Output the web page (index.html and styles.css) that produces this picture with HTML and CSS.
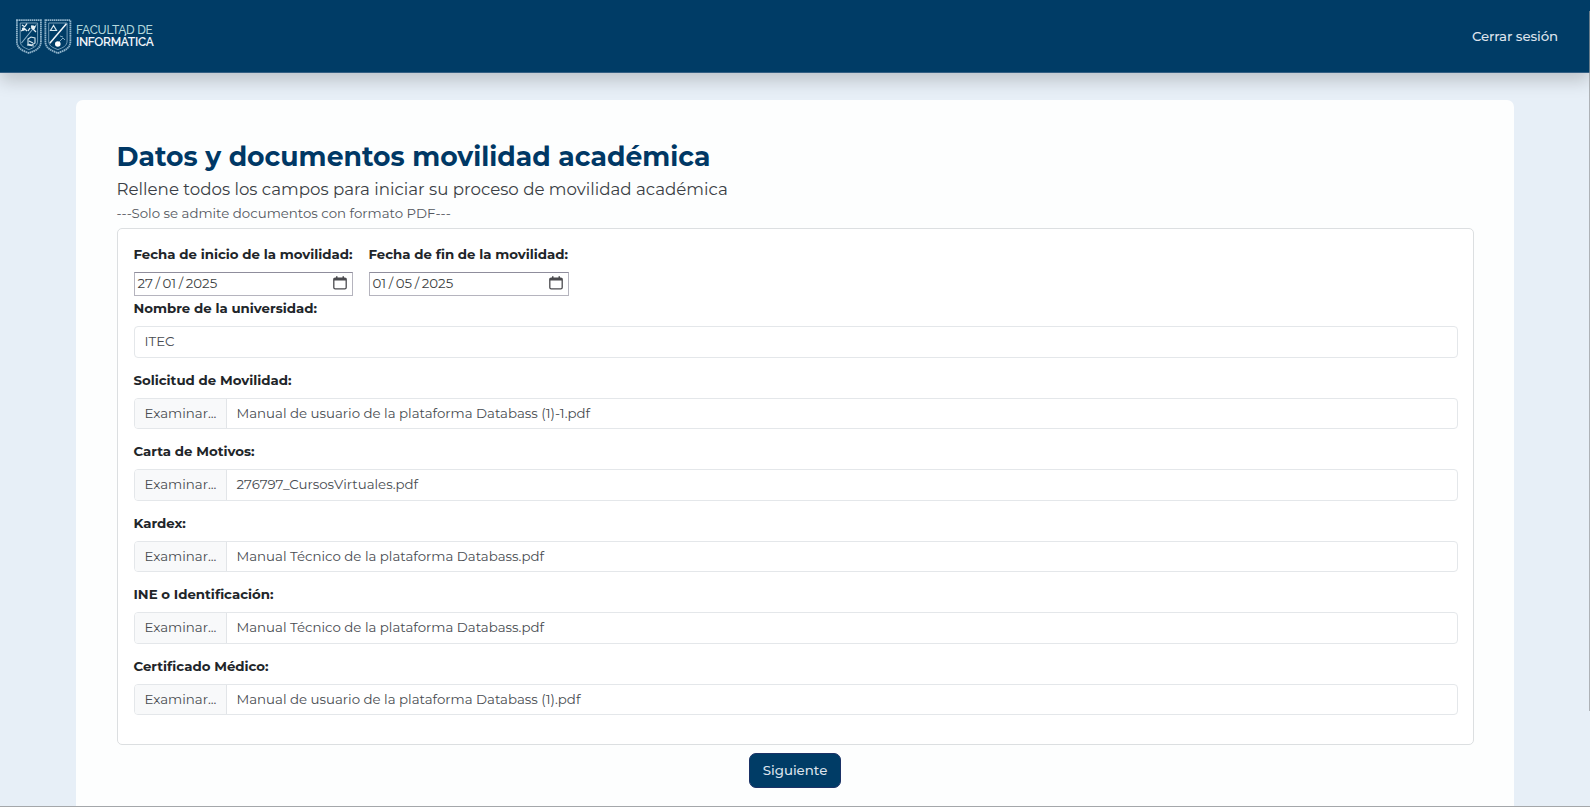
FILE: index.html
```html
<!DOCTYPE html>
<html lang="es">
<head>
<meta charset="utf-8">
<title>Movilidad académica</title>
<link rel="stylesheet" href="styles.css">
</head>
<body>
<header class="navbar">
  <a class="brand">
    <svg class="crest" width="56" height="35" viewBox="0 0 56 35" fill="none" stroke="#8fb3ca">
      <g>
        <path d="M.9 1.2H24.9V22.5C24.9 29.5 19 31.8 12.9 34C6.8 31.8.9 29.5.9 22.5Z" stroke-width="1.8" stroke-dasharray="1.6 .5"/>
        <path d="M4.2 4H21.6V22C21.6 27 17.5 28.8 12.9 30.6C8.3 28.8 4.2 27 4.2 22Z" stroke-width=".8"/>
        <path d="M20.5 5.5L5.5 24" stroke-width="1.1"/>
        <path d="M6 6l3 2M11 4.500l-2 3M5 12l4-2 2 2M15 7l4 1-2 3M17 10l3 3M14 9l-2 3" stroke="#e6f0f5" stroke-width="1.3"/>
        <circle cx="7.500" cy="10" r="1.7" fill="#e6f0f5" stroke="none"/>
        <circle cx="17" cy="8.5" r="2" fill="#e6f0f5" stroke="none"/>
        <path d="M12 20l3-2 4 1v5l-3 2-4-1zM13 22l4 2M11 26l7 1" stroke="#d5e5ed" stroke-width="1.1"/>
      </g>
      <g>
        <path d="M29.4 1.2H54.4V22.5C54.4 29.5 48 31.8 41.9 34C35.8 31.8 29.4 29.5 29.4 22.5Z" stroke-width="1.8" stroke-dasharray="1.6 .5"/>
        <path d="M32.7 4H51.1V22C51.1 27 46.8 28.8 41.9 30.6C37 28.8 32.7 27 32.7 22Z" stroke-width=".8"/>
        <path d="M50.4 4.8L33.8 24.2" stroke="#f2f7fa" stroke-width="1.5"/>
        <path d="M37.500 6.500l-3 5h6zM35 11.5h6" stroke="#d5e5ed" stroke-width="1.2"/>
        <circle cx="41.8" cy="25" r="2.8" fill="#fff" stroke="none"/>
        <path d="M43 23l4-4 2 2M47 18l-3-1" stroke-width=".9"/>
      </g>
    </svg>
    <span class="brand-text">
      <span class="brand-top">FACULTAD DE</span>
      <span class="brand-bottom">INFORMÁTICA</span>
    </span>
  </a>
  <a class="logout">Cerrar sesión</a>
</header>
<main class="card">
  <h1 class="title">Datos y documentos movilidad académica</h1>
  <p class="subtitle">Rellene todos los campos para iniciar su proceso de movilidad académica</p>
  <p class="note">---Solo se admite documentos con formato PDF---</p>
  <form class="panel">
    <div class="dates">
      <div class="date-group date-start">
        <label class="label">Fecha de inicio de la movilidad:</label>
        <div class="date"><span>27</span><i>/</i><span>01</span><i>/</i><span>2025</span>
          <svg class="calendar" width="14" height="14" viewBox="0 0 14 14"><rect x=".8" y="2.2" width="12.4" height="10.6" rx="1.4" fill="none" stroke="#4b4b4f" stroke-width="1.3"/><path d="M.8 2h12.4v2.6H.8zM3 .3h1.5V2H3zM9.5.3H11V2H9.5z" fill="#4b4b4f"/></svg>
        </div>
      </div>
      <div class="date-group date-end">
        <label class="label">Fecha de fin de la movilidad:</label>
        <div class="date"><span>01</span><i>/</i><span>05</span><i>/</i><span>2025</span>
          <svg class="calendar" width="14" height="14" viewBox="0 0 14 14"><rect x=".8" y="2.2" width="12.4" height="10.6" rx="1.4" fill="none" stroke="#4b4b4f" stroke-width="1.3"/><path d="M.8 2h12.4v2.6H.8zM3 .3h1.5V2H3zM9.5.3H11V2H9.5z" fill="#4b4b4f"/></svg>
        </div>
      </div>
    </div>
    <div class="field">
      <label class="label">Nombre de la universidad:</label>
      <div class="control"><span class="value">ITEC</span></div>
    </div>
    <div class="field">
      <label class="label">Solicitud de Movilidad:</label>
      <div class="control"><span class="browse">Examinar...</span><span class="value">Manual de usuario de la plataforma Databass (1)-1.pdf</span></div>
    </div>
    <div class="field">
      <label class="label">Carta de Motivos:</label>
      <div class="control"><span class="browse">Examinar...</span><span class="value">276797_CursosVirtuales.pdf</span></div>
    </div>
    <div class="field">
      <label class="label">Kardex:</label>
      <div class="control"><span class="browse">Examinar...</span><span class="value">Manual Técnico de la plataforma Databass.pdf</span></div>
    </div>
    <div class="field">
      <label class="label">INE o Identificación:</label>
      <div class="control"><span class="browse">Examinar...</span><span class="value">Manual Técnico de la plataforma Databass.pdf</span></div>
    </div>
    <div class="field">
      <label class="label">Certificado Médico:</label>
      <div class="control"><span class="browse">Examinar...</span><span class="value">Manual de usuario de la plataforma Databass (1).pdf</span></div>
    </div>
  </form>
  <button class="next" type="button">Siguiente</button>
</main>
<div class="scroll-edge"></div>
<div class="window-edge"></div>
</body>
</html>
```
FILE: styles.css
```css
* { box-sizing: border-box; }

body {
  margin: 0;
  height: 807px;
  overflow: hidden;
  background: #e7eff7;
  color: #212529;
  font: 13.33px/20px Montserrat, Inter, sans-serif;
}

.navbar {
  height: 73px;
  padding: 0 32px 0 16px;
  display: flex;
  align-items: center;
  justify-content: space-between;
  background: #003c66;
  border-bottom: 1px solid #345f83;
  box-shadow: 0 8px 16px rgba(0, 0, 0, .18);
}

.brand { display: flex; align-items: center; gap: 4px; }
.crest { display: block; }

.brand-text {
  display: flex;
  flex-direction: column;
  margin-top: -1px;
  font: 500 12px/12px Raleway, Lato, sans-serif;
}
.brand-top { color: #b4d8dc; letter-spacing: -.24px; }
.brand-bottom { color: #f0f5fa; font-weight: 600; letter-spacing: -.3px; }

.logout { color: #dde3ec; font-weight: 500; letter-spacing: -.1px; }

.card {
  width: 1438px;
  height: 720px;
  margin: 27px 0 0 76px;
  padding: 38px 40.5px 0;
  display: flex;
  flex-direction: column;
  background: #fdfefe;
  border-radius: 7px;
}

.title {
  margin: 0;
  color: #003865;
  font-size: 26.65px;
  line-height: 38px;
  font-weight: 700;
}
.subtitle {
  margin: 1px 0 0;
  color: #3b3f45;
  font-size: 16.66px;
  line-height: 24px;
}
.note { margin: 2px 0 0; color: #54585e; }

.panel {
  height: 517px;
  margin-top: 5px;
  padding: 15px 15px 0 16px;
  background: #fff;
  border: 1px solid #dcdfe1;
  border-radius: 5px;
}

.label { display: block; font-weight: 700; white-space: nowrap; }

.dates { display: flex; gap: 16px; margin-bottom: 2px; }
.date-start { width: 219px; }
.date-end { width: 200px; }

.date {
  height: 24px;
  margin-top: 8px;
  padding: 0 5px 2px 3px;
  display: flex;
  align-items: center;
  border: 1px solid #b5b4be;
  border-top-color: #8f8d9c;
  color: #3d3f43;
}
.date i { width: 9.6px; text-align: center; font-style: normal; }
.calendar { margin-left: auto; }

.field { margin-bottom: 12px; }

.control {
  height: 31.5px;
  margin-top: 8px;
  display: flex;
  overflow: hidden;
  border: 1px solid #e4e7ea;
  border-radius: 4px;
  color: #484c51;
  line-height: 28px;
}
.browse {
  width: 92px;
  padding-left: 10px;
  background: #f8f9fa;
  border-right: 1px solid #e2e5e8;
}
.value { padding-left: 10px; }

.next {
  width: 92px;
  height: 35px;
  margin: 8px auto 0;
  padding: 0 0 2px;
  border: 1px solid #1b3266;
  border-radius: 7px;
  background: #003c66;
  color: #dde3ec;
  font: inherit;
  font-weight: 500;
}

/* Thin edges of the viewport, drawn over the page */
.scroll-edge {
  position: absolute;
  top: 11px;
  right: 0;
  width: 1px;
  height: 700px;
  background: rgba(150, 152, 155, .7);
}
.window-edge {
  position: absolute;
  top: 806px;
  left: 0;
  right: 0;
  height: 1px;
  background: #a4a7aa;
}
```
